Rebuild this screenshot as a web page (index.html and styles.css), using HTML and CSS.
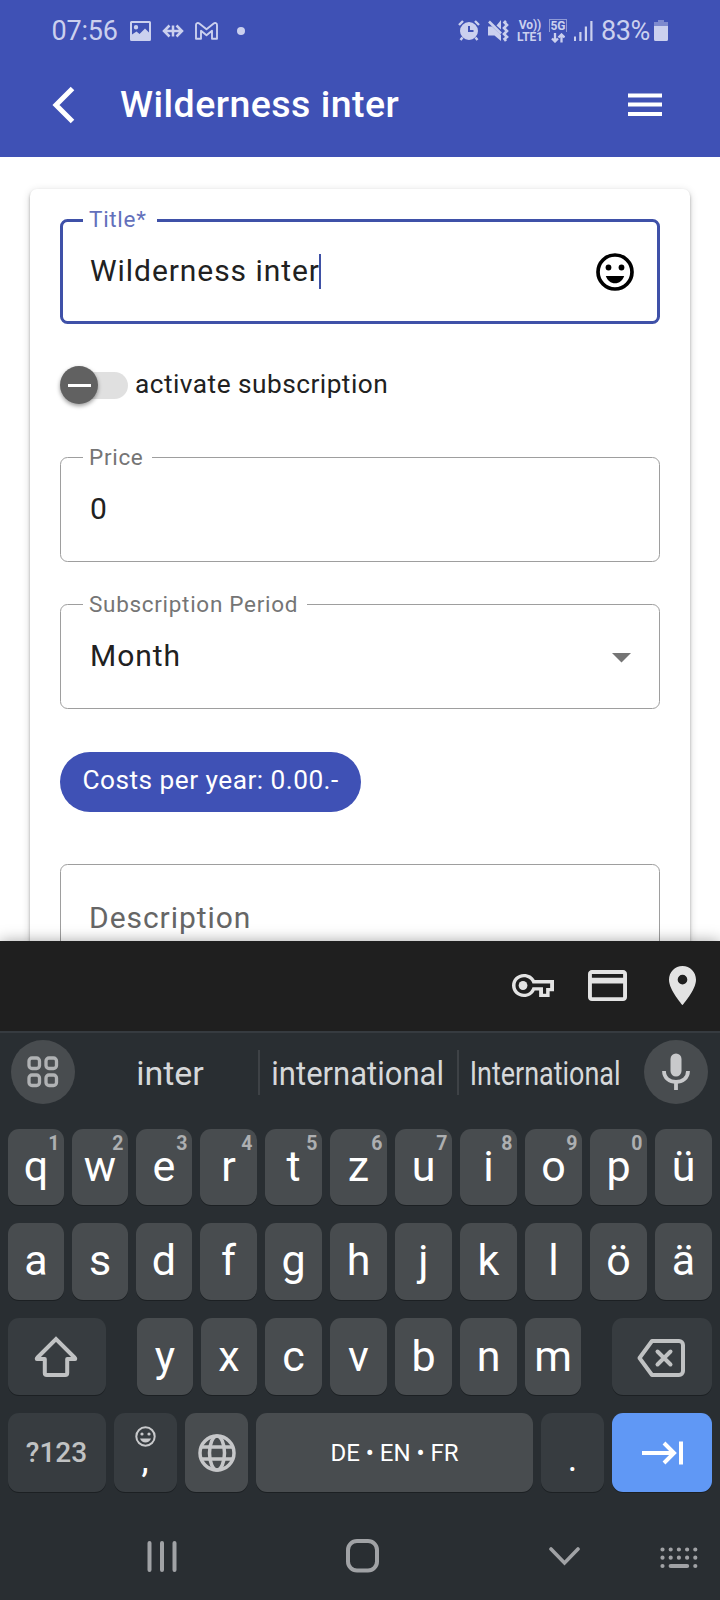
FILE: index.html
```html
<!DOCTYPE html>
<html lang="en">
<head>
<meta charset="utf-8">
<title>Wilderness inter</title>
<link rel="stylesheet" href="styles.css">
</head>
<body>
<div class="screen">
  <header class="header">
    <div class="status">
      <span class="clock">07:56</span>
      <svg class="st-image" width="21" height="20" viewBox="0 0 21 20"><path fill-rule="evenodd" d="M1.5 0h18A1.5 1.5 0 0 1 21 1.500v17a1.500 1.500 0 0 1-1.500 1.500h-18A1.500 1.500 0 0 1 0 18.500v-17A1.500 1.500 0 0 1 1.500 0zM2 2v11.500l4.500-3 3 2.500 5.500-5.500 4 4V2zM6 4a2.200 2.200 0 1 1 0 4.400A2.200 2.200 0 0 1 6 4z"/></svg>
      <svg class="st-arrows" width="22" height="14" viewBox="0 0 22 14" fill="none" stroke="currentColor" stroke-width="2.500"><path d="M7.500 1.500L2 7l5.500 5.500M14.500 1.500L20 7l-5.500 5.500M2 7h18M11 1.500v11"/></svg>
      <svg class="st-mail" width="23" height="18" viewBox="0 0 23 18" fill="none" stroke="currentColor" stroke-width="1.900" stroke-linejoin="round"><path d="M1 16.700V3c0-2 2-2.500 3.300-1.500l7.200 5.700 7.200-5.700C20 .5 22 1 22 3v13.700h-5V8.800l-5.500 4.500L6 8.800v7.900z"/></svg>
      <i class="st-dot"></i>
      <div class="status-right">
        <svg class="st-alarm" width="22" height="21" viewBox="0 0 22 21"><path fill-rule="evenodd" d="M11 2a9 9 0 1 1 0 18 9 9 0 0 1 0-18zM10 6v6h5.500v-2H12V6z"/><path d="M1 5l4-4M21 5l-4-4M4.500 17.500L2.500 20M17.500 17.500l2 2.500" stroke="currentColor" stroke-width="2.400"/></svg>
        <svg class="st-mute" width="21" height="22" viewBox="0 0 21 22"><path d="M0 6.500h4l9 8.500v6l-6.500-5.500H0zM13 0v9.500L8.500 5.500z"/><path d="M1 1.500l12 12M18 1l-1.500 1.500 2.500 2.500-3 3 3 3-3 3 3 3-2.500 2 1.500 2" fill="none" stroke="currentColor" stroke-width="2.600"/></svg>
        <span class="volte"><b>Vo))</b><b>LTE1</b></span>
        <span class="fiveg"><b>5G</b><svg width="14" height="10" viewBox="0 0 14 10" fill="none" stroke="currentColor" stroke-width="2.300"><path d="M4 0v8M1 5.500l3 3 3-3M10.500 9.500v-8M7.500 4.500l3-3 3 3"/></svg></span>
        <svg class="st-signal" width="19" height="20" viewBox="0 0 19 20"><path d="M0 15.500h2V20H0zM5.300 11h2.200v9H5.300zM10.800 5.500H13V20h-2.200zM16.300 0h2.200v20h-2.200z"/></svg>
        <span class="percent">83%</span>
        <svg class="st-battery" width="14" height="21" viewBox="0 0 14 21"><path opacity=".45" d="M4 0h6v2h4v5H0V2h4z"/><path d="M0 6h14v13.500a1.500 1.500 0 0 1-1.500 1.500h-11A1.500 1.500 0 0 1 0 19.500z"/></svg>
      </div>
    </div>
    <div class="appbar">
      <svg width="23" height="38" viewBox="0 0 23 38" fill="none" stroke="#fff" stroke-width="5"><path d="M20.500 2.500L4 19l16.500 16.500"/></svg>
      <h1 class="title">Wilderness inter</h1>
      <svg class="menu" width="34" height="24" viewBox="0 0 34 24" fill="#fff"><path d="M0 .5h34v4H0zM0 9.500h34v4H0zM0 19h34v4H0z"/></svg>
    </div>
  </header>

  <main class="content">
    <div class="card">
      <div class="field focused">
        <span class="label">Title*</span>
        <span class="value">Wilderness inter</span><i class="caret"></i>
        <svg class="smile" width="38" height="38" viewBox="0 0 38 38"><circle cx="19" cy="19" r="17" fill="none" stroke="#000" stroke-width="3.700"/><circle cx="12.500" cy="14.500" r="2.900"/><circle cx="25.500" cy="14.500" r="2.900"/><path d="M9.800 23h18.400c-1.500 4.500-5 7.300-9.200 7.300S11.300 27.500 9.800 23z"/></svg>
      </div>
      <div class="toggle-row">
        <span class="toggle"><span class="thumb"></span></span>
        <span class="toggle-text">activate subscription</span>
      </div>
      <div class="field price">
        <span class="label">Price</span>
        <span class="value">0</span>
      </div>
      <div class="field period">
        <span class="label">Subscription Period</span>
        <span class="value">Month</span>
        <svg class="drop" width="19" height="10" viewBox="0 0 19 10"><path d="M0 0h19L9.500 9.500z" fill="#757575"/></svg>
      </div>
      <div class="chip">Costs per year: 0.00.-</div>
      <div class="field description"><span class="value">Description</span></div>
    </div>
  </main>

  <div class="autofill">
    <svg width="42" height="23" viewBox="0 5 24 14" preserveAspectRatio="none"><path fill-rule="evenodd" d="M21.500 19h-6v-4h-2.500c-1.140 2.420-3.300 4-6.200 4C3 19 0 15.900 0 12s3-7 6.800-7c2.900 0 5 1.400 6.200 3.700h11v6.800h-2.500zm-3.800-2h1.800v-3.500h2.300v-2.700H11.700C11 8.400 9.100 7 6.800 7 4 7 2 9.200 2 12s2 5 4.800 5c2.300 0 4.200-1.340 4.900-4h6z"/><ellipse cx="6.300" cy="12" rx="2.500" ry="2.700"/></svg>
    <svg width="39" height="31" viewBox="2 4 20 16" preserveAspectRatio="none"><path d="M20 4H4c-1.110 0-1.990.89-1.990 2L2 18c0 1.110.89 2 2 2h16c1.110 0 2-.89 2-2V6c0-1.110-.89-2-2-2zm0 14H4v-7h16v7zm0-10H4V6h16v2z"/></svg>
    <svg width="27" height="39" viewBox="5 2 14 20" preserveAspectRatio="none"><path d="M12 2C8.130 2 5 5.130 5 9c0 5.250 7 13 7 13s7-7.750 7-13c0-3.870-3.130-7-7-7zm0 9.500a2.500 2.500 0 0 1 0-5 2.500 2.500 0 0 1 0 5z"/></svg>
  </div>

  <div class="keyboard">
    <div class="suggest">
      <span class="round"><svg width="32" height="32" viewBox="0 0 32 32" fill="none" stroke="#b0b2b4" stroke-width="3.300"><rect x="2" y="2" width="10.500" height="10.500" rx="3"/><rect x="19" y="2" width="10.500" height="10.500" rx="3"/><rect x="2" y="19" width="10.500" height="10.500" rx="3"/><rect x="19" y="19" width="10.500" height="10.500" rx="3"/></svg></span>
      <span class="word word-a"><span>inter</span></span>
      <span class="word word-b"><span>international</span></span>
      <span class="word word-c"><span>International</span></span>
      <span class="round"><svg width="28" height="38" viewBox="0 0 28 38"><rect x="8.500" y="0.500" width="11" height="23" rx="5.500" fill="#c8c9cb"/><path d="M2 18c0 7 5.500 11 12 11s12-4 12-11M14 29v8" fill="none" stroke="#c8c9cb" stroke-width="3.800"/></svg></span>
    </div>

    <div class="row letters">
      <span class="key">q<sup>1</sup></span><span class="key">w<sup>2</sup></span><span class="key">e<sup>3</sup></span><span class="key">r<sup>4</sup></span><span class="key">t<sup>5</sup></span><span class="key">z<sup>6</sup></span><span class="key">u<sup>7</sup></span><span class="key">i<sup>8</sup></span><span class="key">o<sup>9</sup></span><span class="key">p<sup>0</sup></span><span class="key">ü</span>
    </div>
    <div class="row letters row-2">
      <span class="key">a</span><span class="key">s</span><span class="key">d</span><span class="key">f</span><span class="key">g</span><span class="key">h</span><span class="key">j</span><span class="key">k</span><span class="key">l</span><span class="key">ö</span><span class="key">ä</span>
    </div>
    <div class="row row-3">
      <span class="key dark shift"><svg width="44" height="42" viewBox="0 0 44 42" fill="none" stroke="#c0c2c3" stroke-width="4" stroke-linejoin="round"><path stroke-linejoin="miter" d="M3 22L22 3l19 19"/><path stroke-linecap="round" d="M2.800 22.500V23h8v14a2 2 0 0 0 2 2h18.400a2 2 0 0 0 2-2V23h8v-.5"/></svg></span>
      <span class="key">y</span><span class="key">x</span><span class="key">c</span><span class="key">v</span><span class="key">b</span><span class="key">n</span><span class="key">m</span>
      <span class="key dark back"><svg width="48" height="38" viewBox="0 0 48 38" fill="none" stroke="#c0c2c3" stroke-width="4" stroke-linejoin="round"><path d="M15 2h27a4 4 0 0 1 4 4v26a4 4 0 0 1-4 4H15L2.500 19z"/><path stroke-linecap="round" d="M20.500 12.500l13 13M33.500 12.500l-13 13"/></svg></span>
    </div>
    <div class="row row-4">
      <span class="key dark sym">?123</span>
      <span class="key dark comma"><svg width="21" height="21" viewBox="0 0 21 21"><circle cx="10.500" cy="10.500" r="9.200" fill="none" stroke="#c8c9cb" stroke-width="2"/><g fill="#c8c9cb"><circle cx="7" cy="8" r="1.600"/><circle cx="14" cy="8" r="1.600"/><path d="M5 12.500h11c-1 2.500-3 4-5.500 4S6 15 5 12.500z"/></g></svg><span>,</span></span>
      <span class="key globe"><svg width="38" height="38" viewBox="0 0 38 38" fill="none" stroke="#c6c7c9" stroke-width="3.500"><circle cx="19" cy="19" r="17"/><ellipse cx="19" cy="19" rx="7.500" ry="17"/><path d="M3.500 13h31M3.500 25h31"/></svg></span>
      <span class="key space">DE • EN • FR</span>
      <span class="key dark dot"><span>.</span></span>
      <span class="key enter"><svg width="41" height="24" viewBox="0 0 41 24" fill="none" stroke="#fff" stroke-width="4"><path d="M0 12h32M22 2l10 10-10 10M39 .5v23"/></svg></span>
    </div>

    <nav class="nav">
      <svg class="recents" width="30" height="31" viewBox="0 0 30 31" stroke="#a0a2a5" stroke-width="4" stroke-linecap="round"><path d="M2.500 2v27M15 2v27M27.500 2v27"/></svg>
      <svg class="home" width="34" height="34" viewBox="0 0 34 34" fill="none" stroke="#a0a2a5" stroke-width="4"><rect x="2" y="2" width="29" height="29.500" rx="9"/></svg>
      <svg class="hide" width="31" height="19" viewBox="0 0 31 19" fill="none" stroke="#a0a2a5" stroke-width="3.600" stroke-linecap="round"><path d="M2 2l13.500 14L29 2"/></svg>
      <svg class="switch" width="38" height="22" viewBox="0 0 38 22" fill="none" stroke="#a0a2a5" stroke-width="4.200" stroke-linecap="round"><path d="M2.500 2.500h0M10.700 2.500h0M18.900 2.500h0M27.100 2.500h0M35.300 2.500h0M2.500 10.700h0M10.700 10.700h0M18.900 10.700h0M27.100 10.700h0M35.300 10.700h0M2.500 19h0M10.700 19h16.400M35.300 19h0"/></svg>
    </nav>
  </div>
</div>
</body>
</html>
```

FILE: styles.css
```css
* { box-sizing: border-box; }
body { margin: 0; font-family: Roboto, "Liberation Sans", sans-serif; }
svg { display: block; flex: none; }
.screen { width: 720px; height: 1600px; overflow: hidden; display: flex; flex-direction: column; background: #fff; }

.header { height: 157px; flex: none; background: #3f51b5; }
.status { display: flex; align-items: center; height: 61px; padding: 0 52px 0 51.500px; color: #cbd0ee; }
.status svg { fill: currentColor; }
.status .st-arrows, .status .st-mail, .status .fiveg svg { fill: none; }
.clock { width: 78.500px; font-size: 27px; letter-spacing: -0.2px; }
.st-arrows { margin-left: 11px; }
.st-mail { margin-left: 11px; }
.st-dot { width: 8px; height: 8px; margin-left: 19px; border-radius: 50%; background: currentColor; }
.status-right { display: flex; align-items: center; margin-left: auto; }
.st-mute { margin-left: 8px; }
.volte { display: flex; flex-direction: column; align-items: center; width: 26px; margin-left: 8px; font-size: 12px; line-height: 12px; white-space: nowrap; }
.volte b { font-weight: 700; letter-spacing: -0.1px; }
.fiveg { display: flex; flex-direction: column; align-items: center; gap: 1px; width: 18px; margin-left: 6px; }
.fiveg b { width: 18px; height: 13px; border: 1px solid #8f9ad6; border-bottom: 0; font-size: 12px; line-height: 13px; font-weight: 700; text-align: center; }
.st-signal { margin-left: 7px; }
.percent { width: 53px; margin-left: 8px; font-size: 27px; letter-spacing: -0.4px; }

.appbar { display: flex; align-items: center; height: 87px; padding: 0 58px 0 52px; }
.title { margin: -2px 0 0 45px; font-size: 37.500px; font-weight: 500; letter-spacing: 0.47px; color: #fff; white-space: nowrap; }
.menu { margin-left: auto; }

.content { height: 784px; flex: none; overflow: hidden; padding: 32px 30px 0; }
.card { display: flex; flex-direction: column; align-items: flex-start; height: 900px; padding: 30px; border-radius: 7px; background: #fff; box-shadow: 0 2px 3px rgba(0,0,0,.3), 0 2px 9px rgba(0,0,0,.16); }
.field { position: relative; display: flex; align-items: center; width: 600px; height: 105px; flex: none; padding: 0 25px 2px 29px; border: 1px solid #9e9e9e; border-radius: 7.500px; }
.focused { padding: 0 23px 2px 27px; border: 3px solid #3f51a8; }
.label { position: absolute; left: 22px; top: -15px; padding: 0 8.500px 0 6px; background: #fff; font-size: 22.500px; line-height: 28px; letter-spacing: 0.7px; color: #757575; white-space: nowrap; }
.focused .label { left: 20px; top: -17px; padding-right: 10px; color: #6370bb; }
.value { font-size: 30px; letter-spacing: 0.94px; color: #212121; }
.caret { width: 2px; height: 35px; margin: 1px 0 0 -1px; background: #3f51a5; }
.smile, .drop { margin-left: auto; }
.smile { margin-top: 2px; }
.drop { margin-right: 3px; margin-top: 4px; }

.toggle-row { display: flex; align-items: center; height: 38px; margin-top: 42px; }
.toggle { display: flex; align-items: center; width: 68px; height: 27px; border-radius: 14px; background: linear-gradient(90deg, transparent 16px, #e0e0e0 16px); }
.thumb { display: flex; align-items: center; justify-content: center; width: 38px; height: 38px; border-radius: 50%; background: #616161; box-shadow: 0 2px 4px rgba(0,0,0,.4); }
.thumb::after { content: ""; width: 23px; height: 3px; background: #fff; }
.toggle-text { margin: -3px 0 0 7px; font-size: 26.250px; letter-spacing: 0.47px; color: #212121; }
.price { margin-top: 53px; }
.period { margin-top: 42px; }
.chip { display: flex; align-items: center; height: 60px; width: 301px; margin-top: 43px; padding: 0 0 4px 22.500px; border-radius: 30px; background: #3f51b5; font-size: 26.250px; letter-spacing: 0.47px; color: #fff; white-space: nowrap; }
.description { height: 180px; margin-top: 52px; align-items: flex-start; padding: 35px 28px; }
.description .value { color: #666; }

.autofill { position: relative; display: flex; align-items: center; justify-content: flex-end; height: 90px; flex: none; padding: 0 24px 1px 0; background: #1f1f1f; fill: #e3e3e3; box-shadow: 0 0 14px rgba(0,0,0,.35); }
.autofill svg:nth-child(2) { margin: 0 42px 0 34px; }

.keyboard { position: relative; flex: 1; border-top: 2px solid #363b40; background: #292e32; }
.suggest { display: flex; align-items: center; height: 64px; margin-top: 7px; padding: 0 12px 0 11px; }
.round { display: flex; align-items: center; justify-content: center; width: 64px; height: 64px; flex: none; border-radius: 50%; background: #484c4f; }
.word { display: flex; align-items: center; justify-content: center; height: 45px; padding-top: 2px; font-size: 34px; color: #d6d8da; white-space: nowrap; }
.word span { flex: none; }
.word-a { width: 185px; padding-left: 7px; border-right: 2px solid #3e4246; }
.word-b { width: 199px; padding-right: 1px; border-right: 2px solid #3e4246; }
.word-b span { transform: scaleX(.912); }
.word-c { width: 185px; padding-right: 12px; }
.word-c span { transform: scaleX(.793); }

.row { display: grid; column-gap: 8px; padding: 0 8px; }
.letters { grid-template-columns: 56px 56px 56px repeat(8, 57px); height: 76px; margin-top: 25px; }
.row-2 { height: 77px; margin-top: 18px; }
.row-3 { grid-template-columns: 98px 15px 56px 56px 57px 57px 57px 57px 56px 15px 100px; height: 77px; margin-top: 18px; }
.row-3 .shift { grid-column: 1; padding: 0 2px 0 0; }
.row-3 .shift + .key { grid-column: 3; }
.row-3 .back { grid-column: 11; padding: 2px 3px 0 0; }
.row-4 { grid-template-columns: 98px 63px 63px 277px 63px 100px; height: 79px; margin-top: 18px; }
.key { position: relative; display: flex; align-items: center; justify-content: center; padding-bottom: 2px; border-radius: 11px; background: #484c4f; box-shadow: 0 1px 0 #1c2023; font-size: 43px; color: #fff; }
.row-2 .key { padding-bottom: 3px; }
.key sup { position: absolute; top: 4px; right: 4.500px; font-size: 19.500px; line-height: 22px; font-weight: 700; color: #adafb1; }
.dark { background: #373c40; }
.key.sym { padding: 0 1px 0 0; font-size: 28px; font-weight: 500; color: #c0c2c3; }
.key.comma { flex-direction: column; justify-content: flex-start; padding: 13px 1px 0 0; }
.comma span { margin-top: -5px; font-size: 36px; line-height: 36px; }
.key.globe { padding: 0; }
.key.space { padding: 0; font-size: 24px; }
.key.dot { align-items: flex-start; padding-top: 28px; font-size: 36px; line-height: 36px; }
.key.enter { padding: 0; background: #6098f5; }

.nav { display: flex; align-items: center; height: 34px; margin-top: 47px; }
.recents { margin-left: 146.500px; }
.home { margin-left: 169px; }
.hide { margin-left: 169.500px; }
.switch { margin: 4px 0 0 80px; }
```
